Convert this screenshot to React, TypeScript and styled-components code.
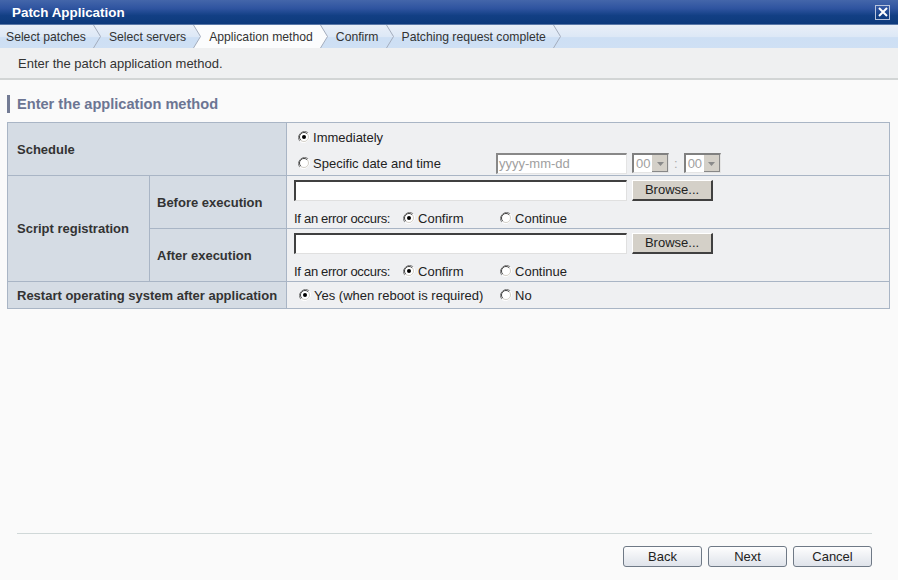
import React from 'react';
import styled, { createGlobalStyle } from 'styled-components';

const GlobalStyle = createGlobalStyle`
  html, body {
    margin: 0;
    padding: 0;
    background: #fafafa;
  }
  body {
    font-family: "Liberation Sans", Arial, sans-serif;
    font-size: 13px;
    color: #222;
  }
`;

const Window = styled.div`
  width: 898px;
  height: 580px;
  display: flex;
  flex-direction: column;
  background: #fafafa;
  overflow: hidden;
`;

const TitleBar = styled.div`
  height: 24px;
  display: flex;
  align-items: center;
  justify-content: space-between;
  padding: 0 8px 0 12px;
  background: linear-gradient(#4466aa 0%, #2f54a0 35%, #123f84 65%, #0d3a7c 100%);
  border-bottom: 1px solid #5a78a8;
`;

const Title = styled.div`
  color: #fff;
  font-weight: bold;
  font-size: 13.4px;
`;

const CloseBox = styled.div`
  width: 13px;
  height: 13px;
  border: 1px solid #b8c4dc;
  display: flex;
  align-items: center;
  justify-content: center;
`;

const StepBar = styled.div`
  height: 23px;
  display: flex;
  background: linear-gradient(#e9eff8 0%, #dde8f6 50%, #cddff4 55%, #cfe0f4 100%);
`;

const Step = styled.div`
  display: flex;
  align-items: stretch;
`;

const StepLabel = styled.div<{ $active?: boolean; $first?: boolean }>`
  display: flex;
  align-items: center;
  padding: 0 7px 0 ${({ $first }) => ($first ? 6 : 8)}px;
  background: ${({ $active }) => ($active ? '#fbfcfd' : 'transparent')};
  font-size: 12.2px;
  color: #333;
`;

const Description = styled.div`
  height: 30px;
  display: flex;
  align-items: center;
  padding-left: 18px;
  background: #eff0f1;
  border-bottom: 2px solid #d2d5d5;
  color: #333;
`;

const Main = styled.div`
  flex: 1;
  padding: 15px 8px 0 7px;
`;

const Heading = styled.div`
  height: 18px;
  display: flex;
  align-items: center;
  border-left: 3px solid #737b94;
  padding-left: 7px;
  color: #6c7593;
  font-weight: bold;
  font-size: 14.6px;
  margin-bottom: 9px;
`;

const Table = styled.table`
  width: 883px;
  border-collapse: collapse;
  table-layout: fixed;
`;

const HeadCell = styled.th<{ $pad?: number }>`
  background: #d5dce4;
  border: 1px solid #a9b5c5;
  text-align: left;
  font-weight: bold;
  font-size: 13px;
  color: #333;
  padding: 0 0 0 ${({ $pad }) => $pad ?? 9}px;
`;

const ValueCell = styled.td<{ $h: number }>`
  background: #eff0f2;
  border: 1px solid #a9b5c5;
  height: ${({ $h }) => $h}px;
  padding: 0 0 0 7px;
  vertical-align: top;
`;

const Line = styled.div<{ $h: number; $top?: number }>`
  height: ${({ $h }) => $h}px;
  padding-top: ${({ $top }) => $top ?? 0}px;
  display: flex;
  align-items: center;
`;

const RadioLabel = styled.label<{ $w?: number; $indent?: number }>`
  display: inline-flex;
  align-items: center;
  gap: 3px;
  width: ${({ $w }) => ($w ? `${$w}px` : 'auto')};
  margin-left: ${({ $indent }) => $indent ?? 0}px;
  color: #222;
`;

const ErrorText = styled.span`
  width: 109px;
  color: #222;
  letter-spacing: -0.3px;
`;

const TextBox = styled.div<{ $w: number; $disabled?: boolean }>`
  width: ${({ $w }) => $w}px;
  height: 21px;
  box-sizing: border-box;
  background: #fff;
  border-style: solid;
  border-width: 2px 1px 1px 2px;
  border-color: ${({ $disabled }) =>
    $disabled ? '#888 #e4e4e4 #e4e4e4 #888' : '#404040 #e0e0e0 #e0e0e0 #404040'};
  color: #a0a0a0;
  display: flex;
  align-items: center;
  padding-left: 1px;
`;

const Select = styled.div<{ $gap?: number }>`
  width: 37px;
  height: 20px;
  margin-left: ${({ $gap }) => $gap ?? 0}px;
  box-sizing: border-box;
  display: flex;
  background: #fff;
  border-style: solid;
  border-width: 2px 1px 1px 2px;
  border-color: #808080 #e4e4e4 #e4e4e4 #808080;
  color: #a0a0a0;
`;

const SelectValue = styled.div`
  flex: 1;
  display: flex;
  align-items: center;
  padding-left: 2px;
`;

const SelectArrow = styled.div`
  width: 16px;
  background: #d4d0c8;
  display: flex;
  align-items: center;
  justify-content: center;
  border-left: 1px solid #fff;
  box-shadow: inset -1px -1px 0 #888;
`;

const Colon = styled.span`
  color: #aaa;
  margin: 0 6px 0 5px;
`;

const Browse = styled.button`
  width: 81px;
  height: 21px;
  margin-left: 5px;
  background: #d4d0c8;
  border-style: solid;
  border-width: 1px 2px 2px 1px;
  border-color: #fff #404040 #404040 #fff;
  font-family: "Liberation Sans", Arial, sans-serif;
  font-size: 13px;
  color: #222;
  padding: 0;
`;

const Footer = styled.div`
  padding: 0 26px 13px 17px;
`;

const Rule = styled.div`
  height: 1px;
  background: #d0d8d8;
  margin-bottom: 12px;
`;

const ButtonRow = styled.div`
  display: flex;
  justify-content: flex-end;
  gap: 6px;
`;

const NavButton = styled.button`
  width: 79px;
  height: 21px;
  border: 1px solid #6f7986;
  border-radius: 3px;
  background: linear-gradient(#fefefe 0%, #eef0f4 50%, #dfe3ea 100%);
  font-family: "Liberation Sans", Arial, sans-serif;
  font-size: 13px;
  color: #222;
  padding: 0;
`;

const Chevron = ({ fillLeft, fillRight }: { fillLeft?: boolean; fillRight?: boolean }) => (
  <svg width="8" height="23" viewBox="0 0 8 23" style={{ display: 'block' }}>
    {fillLeft && <polygon points="0,0 0.5,0 7.5,11.5 0.5,23 0,23" fill="#fbfcfd" />}
    {fillRight && <polygon points="0.5,0 8,0 8,23 0.5,23 7.5,11.5" fill="#fbfcfd" />}
    <polyline points="0.5,0 7.5,11.5 0.5,23" fill="none" stroke="#a4acbc" strokeWidth="1" />
  </svg>
);

const Radio = ({ checked }: { checked?: boolean }) => (
  <svg width="12" height="12" viewBox="0 0 12 12" style={{ display: 'block', flexShrink: 0 }}>
    <path d="M1.8 10.2 A6 6 0 0 1 10.2 1.8" stroke="#808080" strokeWidth="1" fill="none" />
    <path d="M10.2 1.8 A6 6 0 0 1 1.8 10.2" stroke="#ffffff" strokeWidth="1" fill="none" />
    <circle cx="6" cy="6" r="4.5" fill="#fff" />
    <path d="M2.8 9.2 A4.5 4.5 0 0 1 9.2 2.8" stroke="#404040" strokeWidth="1" fill="none" />
    <path d="M9.2 2.8 A4.5 4.5 0 0 1 2.8 9.2" stroke="#d4d0c8" strokeWidth="1" fill="none" />
    {checked && <circle cx="6" cy="6" r="2" fill="#000" />}
  </svg>
);

const DownArrow = () => (
  <svg width="7" height="4" viewBox="0 0 7 4">
    <polygon points="0,0 7,0 3.5,4" fill="#8a8a8a" />
  </svg>
);

const CloseIcon = () => (
  <svg width="10" height="10" viewBox="0 0 10 10">
    <path d="M1 1 L9 9 M9 1 L1 9" stroke="#fff" strokeWidth="2" />
  </svg>
);

const steps = ['Select patches', 'Select servers', 'Application method', 'Confirm', 'Patching request complete'];
const activeStep = 2;

const ErrorChoice = () => (
  <Line $h={20} $top={4}>
    <ErrorText>If an error occurs:</ErrorText>
    <RadioLabel $w={97}>
      <Radio checked />
      Confirm
    </RadioLabel>
    <RadioLabel>
      <Radio />
      Continue
    </RadioLabel>
  </Line>
);

const ScriptInput = () => (
  <Line $h={28}>
    <TextBox $w={333} />
    <Browse>Browse...</Browse>
  </Line>
);

const TimeSelect = ({ gap }: { gap?: number }) => (
  <Select $gap={gap}>
    <SelectValue>00</SelectValue>
    <SelectArrow>
      <DownArrow />
    </SelectArrow>
  </Select>
);

export default function App() {
  return (
    <Window>
      <GlobalStyle />
      <TitleBar>
        <Title>Patch Application</Title>
        <CloseBox>
          <CloseIcon />
        </CloseBox>
      </TitleBar>
      <StepBar>
        {steps.map((s, i) => (
          <Step key={s}>
            <StepLabel $active={i === activeStep} $first={i === 0}>
              {s}
            </StepLabel>
            <Chevron fillLeft={i === activeStep} fillRight={i + 1 === activeStep} />
          </Step>
        ))}
      </StepBar>
      <Description>Enter the patch application method.</Description>
      <Main>
        <Heading>Enter the application method</Heading>
        <Table>
          <colgroup>
            <col style={{ width: 142 }} />
            <col style={{ width: 137 }} />
            <col />
          </colgroup>
          <tbody>
            <tr>
              <HeadCell colSpan={2}>Schedule</HeadCell>
              <ValueCell $h={52}>
                <Line $h={28}>
                  <RadioLabel $indent={4}>
                    <Radio checked />
                    Immediately
                  </RadioLabel>
                </Line>
                <Line $h={24}>
                  <RadioLabel $w={198} $indent={4}>
                    <Radio />
                    Specific date and time
                  </RadioLabel>
                  <TextBox $w={131} $disabled>
                    yyyy-mm-dd
                  </TextBox>
                  <TimeSelect gap={5} />
                  <Colon>:</Colon>
                  <TimeSelect />
                </Line>
              </ValueCell>
            </tr>
            <tr>
              <HeadCell rowSpan={2}>Script registration</HeadCell>
              <HeadCell $pad={7}>Before execution</HeadCell>
              <ValueCell $h={52}>
                <ScriptInput />
                <ErrorChoice />
              </ValueCell>
            </tr>
            <tr>
              <HeadCell $pad={7}>After execution</HeadCell>
              <ValueCell $h={52}>
                <ScriptInput />
                <ErrorChoice />
              </ValueCell>
            </tr>
            <tr>
              <HeadCell colSpan={2}>Restart operating system after application</HeadCell>
              <ValueCell $h={26}>
                <Line $h={26}>
                  <RadioLabel $w={201} $indent={5}>
                    <Radio checked />
                    Yes (when reboot is required)
                  </RadioLabel>
                  <RadioLabel>
                    <Radio />
                    No
                  </RadioLabel>
                </Line>
              </ValueCell>
            </tr>
          </tbody>
        </Table>
      </Main>
      <Footer>
        <Rule />
        <ButtonRow>
          <NavButton>Back</NavButton>
          <NavButton>Next</NavButton>
          <NavButton>Cancel</NavButton>
        </ButtonRow>
      </Footer>
    </Window>
  );
}
